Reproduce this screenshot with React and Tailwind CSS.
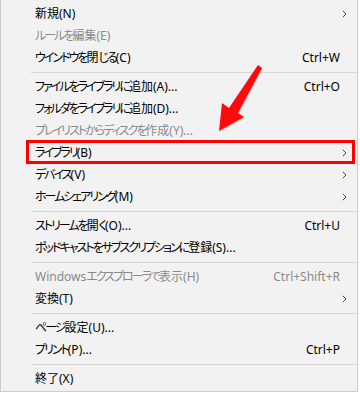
import React from 'react';

const items = [
    { label: '新規(N)', arrow: true },
    { label: 'ルールを編集(E)', disabled: true },
    { label: 'ウインドウを閉じる(C)', key: 'Ctrl+W' },
    'sep',
    { label: 'ファイルをライブラリに追加(A)...', key: 'Ctrl+O' },
    { label: 'フォルダをライブラリに追加(D)...' },
    { label: 'プレイリストからディスクを作成(Y)...', disabled: true },
    { label: 'ライブラリ(B)', arrow: true },
    { label: 'デバイス(V)', arrow: true },
    { label: 'ホームシェアリング(M)', arrow: true },
    'sep',
    { label: 'ストリームを開く(O)...', key: 'Ctrl+U' },
    { label: 'ポッドキャストをサブスクリプションに登録(S)...' },
    'sep',
    { label: 'Windowsエクスプローラで表示(H)', key: 'Ctrl+Shift+R', disabled: true },
    { label: '変換(T)', arrow: true },
    'sep',
    { label: 'ページ設定(U)...' },
    { label: 'プリント(P)...', key: 'Ctrl+P' },
    'sep',
    { label: '終了(X)' },
];

// kana runs are drawn tighter, like the proportional kana of the original UI font
const Label = ({ text }) => (
    <span className="flex-1 whitespace-nowrap">
        {text.split(/([\u3040-\u30ff]+)/).map((part, i) =>
            /[\u3040-\u30ff]/.test(part) ? (
                <span key={i} className="tracking-[-2px]">{part}</span>
            ) : (
                <span key={i}>{part}</span>
            )
        )}
    </span>
);

const Chevron = () => (
    <svg width="5" height="8" viewBox="0 0 5 8" className="text-[#444]">
        <path d="M0.8 0.8 L4 4 L0.8 7.2" fill="none" stroke="currentColor" strokeWidth="1" />
    </svg>
);

const App = () => {
    return (
        <div className="relative w-[360px] h-[393px] bg-white overflow-hidden">
            <div
                className="w-[358px] h-[392px] bg-[#f2f2f2] border-l border-r border-b border-[#cccccc] pt-[3px] text-[12px] text-black [font-feature-settings:'palt']"
                style={{ fontFamily: '"Noto Sans", "Noto Sans CJK JP", sans-serif' }}
            >
                {items.map((item, i) =>
                    item === 'sep' ? (
                        <div key={i} className="h-[7px] flex items-center pl-[30px]">
                            <div className="w-full h-px bg-[#d7d7d7]" />
                        </div>
                    ) : (
                        <div
                            key={i}
                            className={`h-[22px] flex items-center pl-[34px] pr-[17px] leading-[22px] ${item.disabled ? 'text-[#8a8a8a]' : ''}`}
                        >
                            <Label text={item.label} />
                            {item.key && <span className="whitespace-nowrap">{item.key}</span>}
                            {item.arrow && (
                                <span className="mr-[-7px] flex items-center">
                                    <Chevron />
                                </span>
                            )}
                        </div>
                    )
                )}
            </div>

            {/* highlight box around ライブラリ */}
            <div className="absolute left-[26px] top-[140px] w-[329px] h-[24px] border-[3px] border-[#ff0000]" />

            {/* red arrow */}
            <svg className="absolute left-0 top-0" width="360" height="393" viewBox="0 0 360 393">
                <path d="M259 66 L263 69 L239 114 L245 118 L220 132 L223 104 L230 109 Z" fill="#000" opacity="0.15" />
                <path d="M258 65 L262 68 L238 113 L244 117 L219 131 L222 103 L229 108 Z" fill="#ff0a0a" />
            </svg>
        </div>
    );
};

export default App;
